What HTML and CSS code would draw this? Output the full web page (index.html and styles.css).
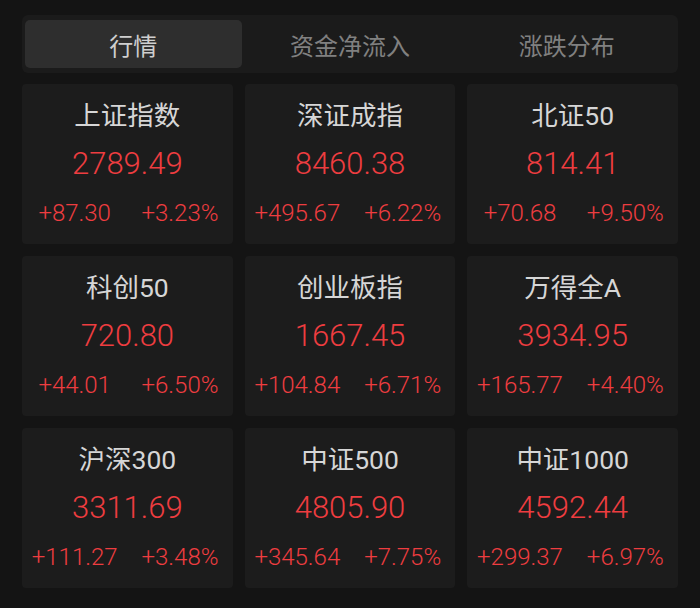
FILE: index.html
```html
<!DOCTYPE html>
<html lang="zh-CN">
<head>
<meta charset="utf-8">
<title>行情</title>
<link rel="stylesheet" href="styles.css">
</head>
<body>
<div class="page">
  <div class="tabs">
    <div class="tab active">行情</div>
    <div class="tab">资金净流入</div>
    <div class="tab">涨跌分布</div>
  </div>
  <div class="grid">
    <div class="card"><div class="name">上证指数</div><div class="price">2789.49</div><div class="chg"><span>+87.30</span><span>+3.23%</span></div></div>
    <div class="card"><div class="name">深证成指</div><div class="price">8460.38</div><div class="chg"><span>+495.67</span><span>+6.22%</span></div></div>
    <div class="card"><div class="name">北证50</div><div class="price">814.41</div><div class="chg"><span>+70.68</span><span>+9.50%</span></div></div>
    <div class="card"><div class="name">科创50</div><div class="price">720.80</div><div class="chg"><span>+44.01</span><span>+6.50%</span></div></div>
    <div class="card"><div class="name">创业板指</div><div class="price">1667.45</div><div class="chg"><span>+104.84</span><span>+6.71%</span></div></div>
    <div class="card"><div class="name">万得全A</div><div class="price">3934.95</div><div class="chg"><span>+165.77</span><span>+4.40%</span></div></div>
    <div class="card"><div class="name">沪深300</div><div class="price">3311.69</div><div class="chg"><span>+111.27</span><span>+3.48%</span></div></div>
    <div class="card"><div class="name">中证500</div><div class="price">4805.90</div><div class="chg"><span>+345.64</span><span>+7.75%</span></div></div>
    <div class="card"><div class="name">中证1000</div><div class="price">4592.44</div><div class="chg"><span>+299.37</span><span>+6.97%</span></div></div>
  </div>
</div>
</body>
</html>
```
FILE: styles.css
```css
html, body {
  margin: 0;
  padding: 0;
  background: #141414;
}
body {
  width: 700px;
  height: 608px;
  overflow: hidden;
  font-family: Roboto, "Noto Sans", "Noto Sans CJK SC", sans-serif;
}
.page {
  padding: 15px 22px 0 22px;
}
.tabs {
  display: grid;
  grid-template-columns: 1fr 1fr 1fr;
  height: 58px;
  box-sizing: border-box;
  padding: 5px 3px;
  background: #1b1b1b;
  border-radius: 6px;
}
.tab {
  display: flex;
  align-items: center;
  justify-content: center;
  font-family: "Noto Sans CJK SC", sans-serif;
  font-size: 24px;
  font-weight: 400;
  color: #808080;
  border-radius: 5px;
}
.tab.active {
  background: #2e2e2e;
  color: #cfcfcf;
}
.grid {
  margin-top: 11px;
  display: grid;
  grid-template-columns: repeat(3, 1fr);
  grid-auto-rows: 160px;
  column-gap: 12px;
  row-gap: 12px;
}
.card {
  background: #1c1c1c;
  border-radius: 4px;
  display: flex;
  flex-direction: column;
  align-items: stretch;
  padding-top: 14px;
  box-sizing: border-box;
}
.name {
  height: 36px;
  line-height: 36px;
  text-align: center;
  font-size: 26.5px;
  font-weight: 400;
  color: #d6d6d6;
  font-family: Roboto, "Noto Sans CJK SC", sans-serif;
}
.price {
  margin-top: 10px;
  height: 40px;
  line-height: 40px;
  text-align: center;
  font-size: 31px;
  font-weight: 300;
  color: #ee3d40;
}
.chg {
  margin-top: 14px;
  height: 30px;
  line-height: 30px;
  display: grid;
  grid-template-columns: 1fr 1fr;
  font-size: 24px;
  font-weight: 300;
  color: #ee3d40;
}
.chg span {
  text-align: center;
}
```
